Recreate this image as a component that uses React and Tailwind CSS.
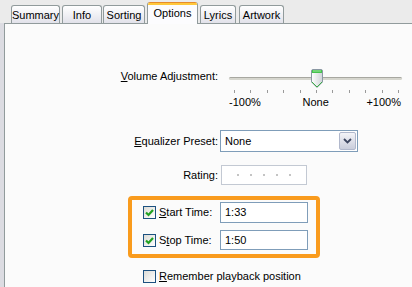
import React from "react";

function Tab({ label, width, ml, selected }) {
  if (selected) {
    return (
      <div
        className={`relative z-10 -mb-px h-[22px] flex flex-col items-stretch border-x border-[#919b9c] rounded-t-[3px] bg-[#fcfcfe] overflow-hidden`}
        style={{ width, marginLeft: ml }}
      >
        <div className="h-[1px] bg-[#e68b2c]" />
        <div className="h-[2px] bg-[#ffc83c]" />
        <div className="flex-1 flex items-start justify-center pt-[2px] leading-[13px]">{label}</div>
      </div>
    );
  }
  return (
    <div
      className="h-[18px] flex items-center justify-center border border-b-0 border-[#919b9c] rounded-t-[3px] bg-gradient-to-b from-white to-[#e2e2ea] leading-[13px] pt-[1px]"
      style={{ width, marginLeft: ml }}
    >
      {label}
    </div>
  );
}

function Checkbox({ checked }) {
  return (
    <div className="w-[13px] h-[13px] shrink-0 border border-[#1c5180] bg-gradient-to-br from-[#dcdcd7] to-white flex items-center justify-center">
      {checked && (
        <svg width="11" height="11" viewBox="0 0 11 11">
          <polyline points="2,5.5 4.5,8 9,3" fill="none" stroke="#21a121" strokeWidth="2.2" />
        </svg>
      )}
    </div>
  );
}

function Thumb() {
  return (
    <svg width="12" height="19" viewBox="0 0 12 19">
      <defs>
        <linearGradient id="tb" x1="0" y1="0" x2="1" y2="0">
          <stop offset="0" stopColor="#ffffff" />
          <stop offset="1" stopColor="#cfd3d8" />
        </linearGradient>
      </defs>
      <path d="M0.5 2 Q0.5 0.5 2 0.5 H10 Q11.5 0.5 11.5 2 V13 L6 18.5 L0.5 13 Z" fill="url(#tb)" stroke="#8a97a3" />
      <path d="M1 13 L6 18 L11 13" fill="none" stroke="#3cae48" strokeWidth="1" />
      <rect x="1" y="1" width="10" height="3" fill="#45c24e" />
      <rect x="2" y="1.5" width="8" height="1" fill="#9fe59f" />
    </svg>
  );
}

export default function App() {
  const ticks = Array.from({ length: 11 });
  return (
    <div className="w-[412px] h-[287px] overflow-hidden bg-[#ebebeb] text-[11px] text-black font-['Liberation_Sans',Arial,sans-serif]">
      <div className="flex items-end h-[23px] pl-[11px]">
        <Tab label="Summary" width="49px" ml="0px" />
        <Tab label="Info" width="40px" ml="2px" />
        <Tab label="Sorting" width="42px" ml="1px" />
        <Tab label="Options" width="51px" ml="2px" selected />
        <Tab label="Lyrics" width="36px" ml="2px" />
        <Tab label="Artwork" width="45px" ml="3px" />
      </div>
      <div className="flex h-[264px]">
        <div className="w-[4px] bg-[#dcdce2]" />
        <div className="flex-1 border-l border-t border-[#919b9c] bg-[#fbfbfb] flex flex-col">
          {/* Volume */}
          <div className="flex mt-[44px]">
            <div className="w-[213px] text-right leading-[13px] pt-[2px]">
              <span className="underline">V</span>olume Adjustment:
            </div>
            <div className="ml-[11px] w-[173px] flex flex-col">
              <div className="relative h-[20px]">
                <div className="absolute left-0 right-0 top-[9px] h-[3px] rounded-full bg-[#d6d6ce] border-t border-[#a7a7a0]" />
                <div className="absolute left-[82px] top-[1px]">
                  <Thumb />
                </div>
              </div>
              <div className="flex justify-between pl-[5px] pr-[3px] mt-[2px]">
                {ticks.map((_, i) => (
                  <div key={i} className="w-[1px] h-[3px] bg-[#9a9a9a]" />
                ))}
              </div>
              <div className="flex justify-between mt-[3px] leading-[13px] pr-[1px]">
                <span>-100%</span>
                <span className="pl-[4px]">None</span>
                <span>+100%</span>
              </div>
            </div>
          </div>
          {/* Equalizer */}
          <div className="flex items-center mt-[21px]">
            <div className="w-[213px] text-right leading-[13px]">
              <span className="underline">E</span>qualizer Preset:
            </div>
            <div className="ml-[2px] w-[138px] h-[22px] border border-[#7f9db9] bg-white flex items-center justify-between pl-[4px] pr-[1px]">
              <span className="leading-[13px]">None</span>
              <div className="w-[17px] h-[18px] border border-[#b1b8cc] rounded-[2px] bg-gradient-to-b from-[#f4f4f8] to-[#c9cddb] flex items-center justify-center">
                <svg width="9" height="6" viewBox="0 0 9 6">
                  <polyline points="1,1 4.5,4.5 8,1" fill="none" stroke="#3d4660" strokeWidth="1.8" />
                </svg>
              </div>
            </div>
          </div>
          {/* Rating */}
          <div className="flex items-center mt-[13px]">
            <div className="w-[213px] text-right leading-[13px]">Rating:</div>
            <div className="ml-[3px] w-[86px] h-[20px] border border-[#c3c9d3] bg-white flex items-center gap-[11px] pl-[15px]">
              {[0, 1, 2, 3, 4].map((i) => (
                <div key={i} className="w-[2px] h-[2px] bg-[#c4c4c4]" />
              ))}
            </div>
          </div>
          {/* Orange box */}
          <div className="ml-[123px] mt-[11px] w-[192px] h-[62px] border-4 border-[#f99b1d] rounded-[4px] flex flex-col pt-[2px]">
            <div className="flex items-center pl-[11px]">
              <Checkbox checked />
              <div className="ml-[3px] w-[61px] leading-[13px]">
                <span className="underline">S</span>tart Time:
              </div>
              <div className="w-[88px] h-[21px] border border-[#7f9db9] bg-white flex items-center pl-[4px] leading-[13px]">1:33</div>
            </div>
            <div className="flex items-center pl-[11px] mt-[7px]">
              <Checkbox checked />
              <div className="ml-[3px] w-[61px] leading-[13px]">
                S<span className="underline">t</span>op Time:
              </div>
              <div className="w-[88px] h-[20px] border border-[#7f9db9] bg-white flex items-center pl-[4px] leading-[13px]">1:50</div>
            </div>
          </div>
          {/* Remember */}
          <div className="flex items-center ml-[138px] mt-[12px]">
            <Checkbox />
            <div className="ml-[3px] leading-[13px]">
              <span className="underline">R</span>emember playback position
            </div>
          </div>
        </div>
      </div>
    </div>
  );
}
